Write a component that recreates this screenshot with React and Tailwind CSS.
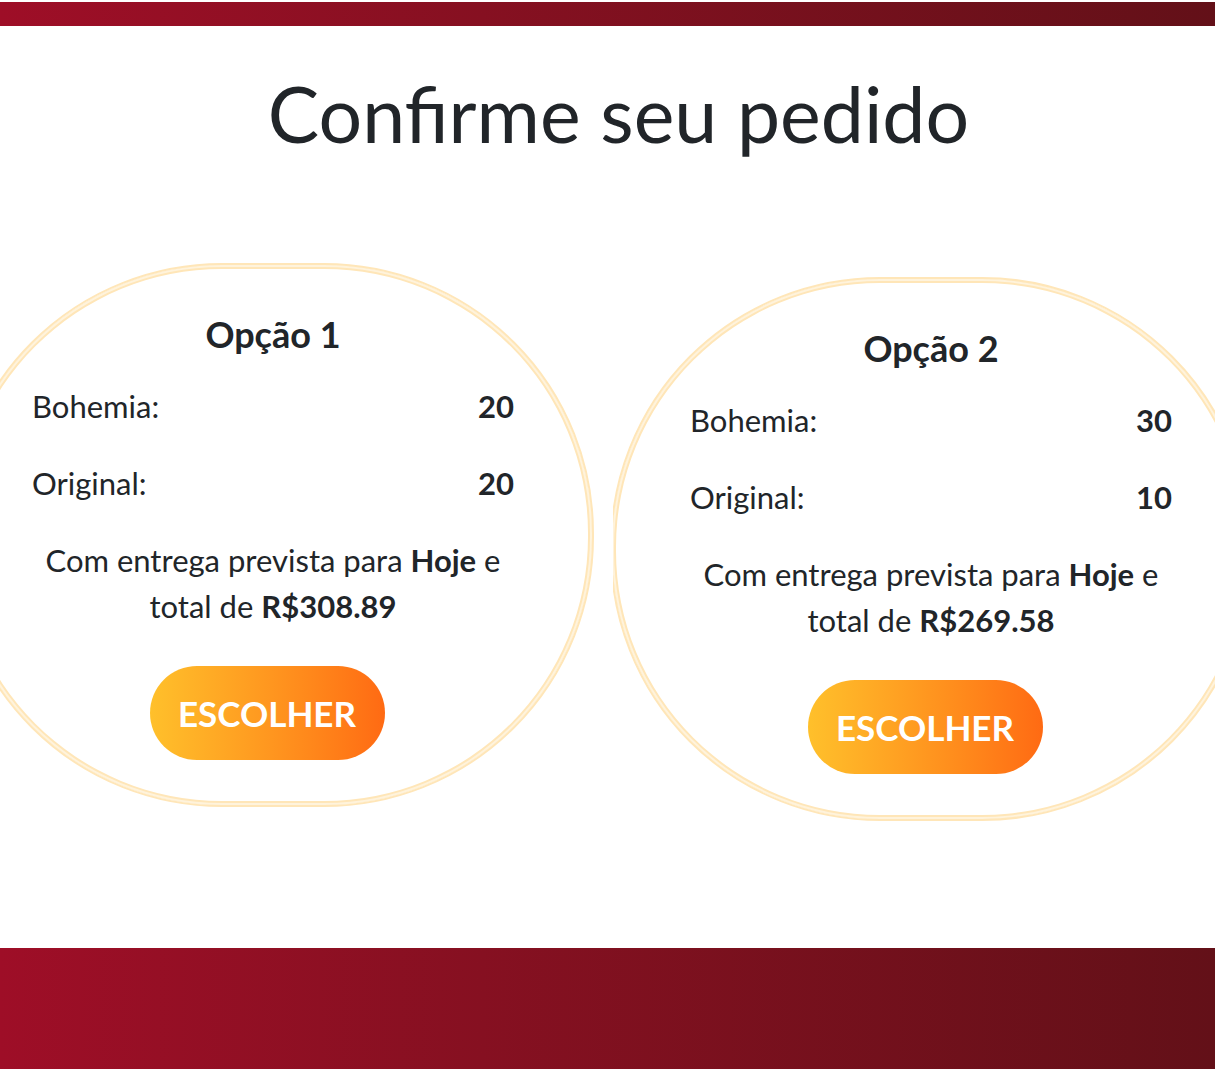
const options = [
  { name: "Opção 1", items: [["Bohemia:", 20], ["Original:", 20]], total: "R$308.89" },
  { name: "Opção 2", items: [["Bohemia:", 30], ["Original:", 10]], total: "R$269.58" },
];

function OptionCard({ option }) {
  return (
    <section className="w-[642px] rounded-[270px] border-2 border-[#ffe6b8] px-[78px] pt-[46px] pb-[45px] text-center shadow-[inset_0_0_0_2px_#fff3dc,inset_0_0_0_4px_#ffe6b8]">
      <h2 className="text-[36px] leading-[46px] font-bold">{option.name}</h2>
      <dl className="mt-[26px] flex flex-col gap-[31px] text-[31px] leading-[46px]">
        {option.items.map(([label, amount]) => (
          <div key={label} className="flex justify-between">
            <dt>{label}</dt>
            <dd className="font-bold">{amount}</dd>
          </div>
        ))}
      </dl>
      <p className="mt-[31px] text-[31px] leading-[46px]">
        Com entrega prevista para <b>Hoje</b> e total de <b>{option.total}</b>
      </p>
      <div className="mt-[37px] flex justify-center pr-3">
        <button
          type="button"
          className="h-[94px] w-[235px] rounded-full bg-linear-to-r from-[#ffc02b] to-[#ff6a13] text-[35px] font-bold text-white"
        >
          ESCOLHER
        </button>
      </div>
    </section>
  );
}

export default function App() {
  return (
    <div className="flex min-h-screen flex-col overflow-hidden bg-white pt-[2px] pr-[5px] pb-[3px] font-['Lato',sans-serif] text-[#212529]">
      <header className="h-6 bg-linear-to-r from-[#9e0e27] to-[#631018]" />
      <main className="grow overflow-hidden">
        <h1 className="mt-[41px] ml-[22px] text-center text-[77px] leading-[92px]">Confirme seu pedido</h1>
        <div className="mt-[104px] mr-[11px] flex items-start justify-center gap-[19px] pb-[127px]">
          <div className="shrink-0">
            <OptionCard option={options[0]} />
          </div>
          <div className="mt-[14px] shrink-0 overflow-hidden">
            <div className="-ml-[3px]">
              <OptionCard option={options[1]} />
            </div>
          </div>
        </div>
      </main>
      <footer className="h-[121px] bg-linear-to-r from-[#9e0e27] to-[#631018]" />
    </div>
  );
}
